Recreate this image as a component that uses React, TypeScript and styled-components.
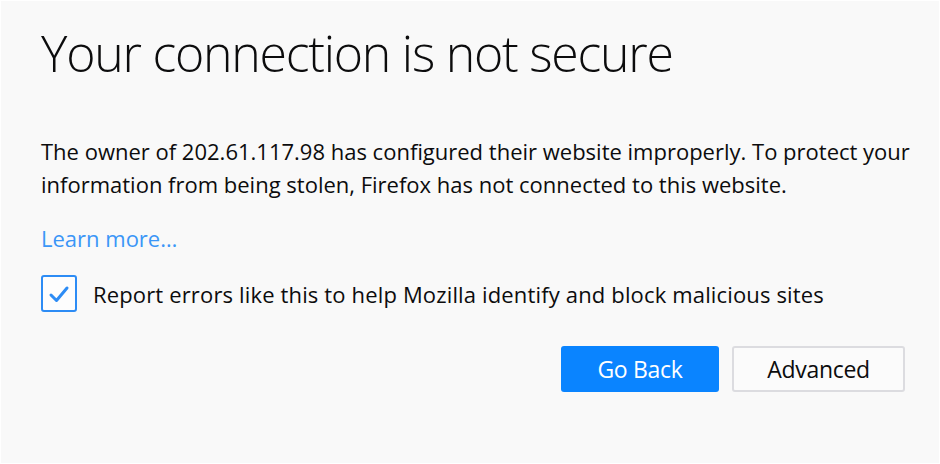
import styled, { createGlobalStyle } from "styled-components";

const GlobalStyle = createGlobalStyle`
  html, body {
    margin: 0;
    padding: 0;
    background: #f9f9f9;
  }
  * {
    box-sizing: border-box;
  }
`;

const Page = styled.div`
  width: 940px;
  height: 464px;
  border: 1px solid #ffffff;
  background: #f9f9f9;
  padding: 17px 20px 0 40px;
  font-family: "Open Sans", "Noto Sans", sans-serif;
  color: #0c0c0d;
`;

const Title = styled.h1`
  margin: 0;
  font-size: 50px;
  font-weight: 300;
  line-height: 70px;
  letter-spacing: -1.25px;
  color: #0c0c0d;
`;

const Description = styled.p`
  margin: 47px 0 0;
  font-size: 22px;
  line-height: 33px;
  letter-spacing: 0px;
  white-space: nowrap;
`;

const LearnMore = styled.a`
  display: inline-block;
  margin-top: 21px;
  font-size: 22px;
  line-height: 33px;
  color: #3b96f7;
  text-decoration: none;
`;

const CheckRow = styled.label`
  display: flex;
  align-items: center;
  gap: 16px;
  margin-top: 20px;
  font-size: 22px;
  letter-spacing: 0.15px;
`;

const Box = styled.span`
  width: 36px;
  height: 37px;
  flex: none;
  border: 2px solid #2d8cf5;
  border-radius: 3px;
  background: #fdfdfd;
  display: flex;
  align-items: center;
  justify-content: center;
`;

const Actions = styled.div`
  display: flex;
  justify-content: flex-end;
  gap: 13px;
  margin-top: 34px;
  padding-right: 14px;
`;

const Button = styled.button<{ primary?: boolean }>`
  height: 46px;
  min-width: ${(p) => (p.primary ? "158px" : "173px")};
  border-radius: 3px;
  font-family: inherit;
  font-size: 23px;
  letter-spacing: -0.3px;
  cursor: pointer;
  border: ${(p) => (p.primary ? "none" : "2px solid #dcdce0")};
  background: ${(p) => (p.primary ? "#0a84ff" : "#fbfbfb")};
  color: ${(p) => (p.primary ? "#ffffff" : "#0c0c0d")};
`;

export default function App() {
  return (
    <>
      <GlobalStyle />
      <Page>
        <Title>Your connection is not secure</Title>
        <Description>
          The owner of 202.61.117.98 has configured their website improperly. To protect your
          <br />
          information from being stolen, Firefox has not connected to this website.
        </Description>
        <LearnMore href="#">Learn more…</LearnMore>
        <CheckRow>
          <Box>
            <svg width="22" height="20" viewBox="0 0 22 20">
              <path d="M3 11 L8.5 16.5 L19 4" fill="none" stroke="#2d8cf5" strokeWidth="3" strokeLinecap="round" strokeLinejoin="round" />
            </svg>
          </Box>
          Report errors like this to help Mozilla identify and block malicious sites
        </CheckRow>
        <Actions>
          <Button primary>Go Back</Button>
          <Button>Advanced</Button>
        </Actions>
      </Page>
    </>
  );
}
